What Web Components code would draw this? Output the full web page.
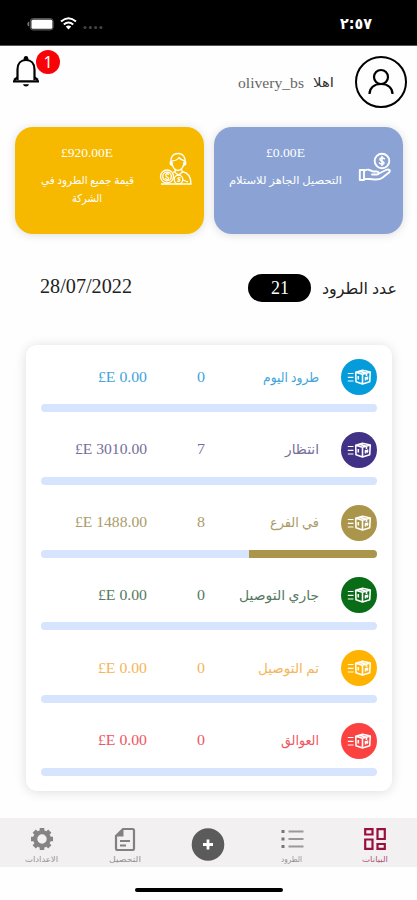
<!DOCTYPE html>
<html lang="ar">
<head>
<meta charset="utf-8">
<title>Olivery</title>
<style>
body{margin:0;background:#fff;font-family:"Liberation Serif","DejaVu Sans",serif;color:#222}
</style>
</head>
<body>
<app-screen></app-screen>
<script>
const define = (name, html, init) => customElements.define(name, class extends HTMLElement {
  connectedCallback() {
    if (this.shadowRoot) return;
    const root = this.attachShadow({mode: 'open'});
    root.innerHTML = typeof html === 'function' ? html(this) : html;
    if (init) init(this, root);
  }
});

/* A single line of text, condensed or widened to the width given by "w". */
define('fit-text', el => `<style>
  :host{display:block;width:${el.getAttribute('w')}px;white-space:nowrap;direction:ltr;text-align:left;flex:none}
  span{display:inline-block;transform-origin:0 50%;direction:${/[\u0600-\u06ff]/.test(el.textContent) ? 'rtl' : 'ltr'}}
</style><span><slot></slot></span>`, (el, root) => {
  const s = root.querySelector('span');
  const n = s.getBoundingClientRect().width;
  if (n) s.style.transform = `scaleX(${el.getAttribute('w') / n})`;
});

define('status-bar', `<style>
  :host{display:flex;box-sizing:border-box;height:46px;background:#000;border-bottom:1px solid #555;color:#fff;padding:2px 45px 0 27px;align-items:center;justify-content:space-between}
  div{display:flex;align-items:center;gap:6px}
  fit-text{font:bold 16px/20px "DejaVu Sans",sans-serif}
</style>
<div>
 <svg width="27" height="14" viewBox="0 0 27 14"><path d="M2 4.5Q.3 5 .3 7T2 9.500Z" fill="#777"/><rect x="3.200" y="1.500" width="23" height="11.500" rx="3" fill="#333" stroke="#555"/><rect x="4.500" y="2.700" width="20.800" height="9" rx="1.500" fill="#fff"/></svg>
 <svg width="17" height="13" viewBox="0 0 17 13" fill="none" stroke="#fff" stroke-width="2"><path d="M1 4.500Q8.500-2 16 4.500M3.800 7.600Q8.500 3.500 13.200 7.600"/><path d="M5.800 9.600Q8.500 7.400 11.200 9.600L8.500 12.500Z" fill="#fff" stroke="none"/></svg>
 <svg width="20" height="13" viewBox="0 0 20 13" fill="#444"><circle cx="2" cy="10.500" r="1.500"/><circle cx="7.300" cy="10.500" r="1.500"/><circle cx="12.600" cy="10.500" r="1.500"/><circle cx="17.900" cy="10.500" r="1.500"/></svg>
</div>
<fit-text w="32">٢:٥٧</fit-text>`);

define('user-header', `<style>
  :host{display:flex;box-sizing:border-box;height:81px;padding:10px 10px 0 13px;justify-content:space-between;align-items:flex-start}
  .bell{position:relative;width:26px;height:31px}
  .bell svg{display:block}
  .badge{position:absolute;left:23px;top:-6px;width:24px;height:24px;border-radius:50%;background:#f80308;color:#fff;font:16px/24px "Noto Sans",sans-serif;text-align:center}
  .user{display:flex;align-items:center}
  .n{font-size:15px;color:#666;margin-right:9px;padding-top:2px}
  .h{font-size:12.5px;color:#333;margin-right:21px;padding-top:2px}
</style>
<div class="bell"><svg width="26" height="31" viewBox="0 0 26 31"><g fill="none" stroke="#000" stroke-width="2.200"><path d="M4.500 24V13.500C4.500 7.500 8 4 13 4s8.500 3.500 8.500 9.500V24"/><path d="M1 23.800L4.500 21.500M25 23.800L21.500 21.500M0 25.300H26"/></g><path d="M10.500 4Q10.500 0 13 0T15.500 4ZM10 28.300H16Q15.500 30.500 13 30.500T10 28.300Z"/></svg><div class="badge">1</div></div>
<div class="user"><fit-text class="n" w="66">olivery_bs</fit-text><fit-text class="h" w="21">اهلا</fit-text>
<svg width="52" height="52" viewBox="0 0 52 52" fill="none" stroke="#000"><circle cx="26" cy="26" r="25" stroke-width="2"/><circle cx="26" cy="21" r="7" stroke-width="2.200"/><path d="M14.500 38C14.500 32 19 28 26 28S37.500 32 37.500 38" stroke-width="2.200"/></svg></div>`);

define('summary-card', `<style>
  :host{display:flex;direction:rtl;box-sizing:border-box;width:189px;height:107px;border-radius:18px;padding-top:17px;box-shadow:0 1px 10px #0002;color:#fff}
  .ic{width:34px;height:36px;margin:8px 11px 0 0;flex:none}
  .t{display:flex;flex-direction:column;align-items:center;width:114px;margin-right:15px}
</style><div class="ic"><slot name="icon"></slot></div><div class="t"><slot></slot></div>`);

define('summary-cards', `<style>
  :host{display:flex;justify-content:space-between;padding:0 14.500px 0 15px}
  .o{background:#f7b900}.b{background:#8aa3d4}
  .v{font-size:13px;line-height:17px}
  .l{font-size:11px;line-height:18px}
  .f{margin-top:10px}
  svg{display:block;fill:none;stroke:#fff}
</style>
<summary-card class="o">
 <svg slot="icon" width="34" height="36" viewBox="0 0 34 36" stroke-width="1.300"><path d="M12 12C11 5 14 1.500 19 1.500S27 5 26 12M12.500 9C17 9 19 7 20 5.500C22 8 24 8 25.500 9M13 10C13 15 16 18.500 19 18.500S25 15 25 10M11.500 9.500Q10.500 13 13 13M26.500 9.500Q27.500 13 25 13M16 17.500V20.500L19.500 23L23 20.500V17.500M14 20.500L16 19.500M23 19.500C29 20.500 32 24 32 32H2"/><circle cx="8" cy="24.500" r="6.500"/><circle cx="8" cy="24.500" r="4.300"/><path d="M10 22.500C8 21 6 22 7 24S10 25 9.500 27S6.500 27 6 26"/><circle cx="19.500" cy="27.500" r="4.300"/><path d="M21.500 26C19 25 18 27 20 27.500S20 30 18 29M24 28L29 30"/></svg>
 <fit-text class="v" w="52">£920.00E</fit-text><fit-text class="l f" w="93">قيمة جميع الطرود في</fit-text><fit-text class="l" w="30">الشركة</fit-text>
</summary-card>
<summary-card class="b">
 <svg slot="icon" width="34" height="36" viewBox="0 0 34 36" stroke-width="1.900" stroke-linejoin="round" stroke-linecap="round"><circle cx="24" cy="9" r="7.300"/><path d="M26.300 6.700C24 5 21.700 6 22 7.700S26.300 9 26 11S23 12.500 21.500 11M24 4.500V13.500" stroke-width="1.600"/><path d="M1.800 18H6V28H1.800ZM6 19C10 16.500 12 18 15 19.500H19C21.500 20 21 22.500 19 22.500H14M21 21.500L28 18C31 16.500 33 18.500 31 20.500L24 26C20 29 15 27 11 27H6"/></svg>
 <fit-text class="v" w="39">£0.00E</fit-text><fit-text class="l f" w="113">التحصيل الجاهز للاستلام</fit-text>
</summary-card>`);

define('count-row', `<style>
  :host{display:flex;direction:rtl;align-items:center;height:28px;margin-top:40px;padding:0 20px 0 40px}
  .p{display:flex;box-sizing:border-box;width:63px;height:28px;margin-right:11px;background:#000;color:#fff;border-radius:14px;align-items:center;justify-content:center;font-size:19px}
  .l{font-size:16px}
  .d{font-size:20px;margin-right:auto;padding-bottom:4px}
</style><fit-text class="l" w="75">عدد الطرود</fit-text><div class="p"><fit-text w="18">21</fit-text></div><fit-text class="d" w="92">28/07/2022</fit-text>`);

define('status-row', el => {
  const a = n => el.getAttribute(n);
  return `<style>
  :host{display:block;height:72.8px}
  .r{display:flex;direction:rtl;align-items:center;height:36px}
  .i{width:36px;height:36px;border-radius:50%;background:${a('color')};flex:none}
  .n{margin-right:22px;font-size:13.5px;color:${a('ink')}}
  .s{flex:1}
  .c{width:8px;margin-left:50px;font-size:15px;color:${a('ink')}}
  .m{display:flex;width:106px;font-size:15px;color:${a('ink')}}
  .b{height:8px;border-radius:4px;margin-top:9px;overflow:hidden;background:#d7e4fd;direction:rtl}
  .b div{height:8px;width:${a('fill') || 0}%;background:${a('color')}}
</style><div class="r"><svg class="i" viewBox="0 0 36 36" fill="none" stroke="#fff" stroke-width="1.600" stroke-linejoin="round"><path d="M6.800 14.500H12.500M6.800 18.300H12.500M6.800 22H12.500" stroke-width="1.200"/><path d="M14.700 13.200L21.500 11.200L29.300 13L28.700 22.800L21.500 25L15 22.800ZM14.700 13.200L21.500 15.300L29.300 13M21.500 15.500V25M18 12.200L25.500 14.200V17M17.300 17V20.500M24.500 21.500V18.500L26.500 20V17.500"/></svg>
<fit-text class="n" w="${a('w')}">${a('name')}</fit-text><span class="s"></span><fit-text class="c" w="8">${a('count')}</fit-text><div class="m"><fit-text w="${a('mw')}">${a('amount')}</fit-text></div></div><div class="b"><div></div></div>`;
});

define('status-list', `<style>
  :host{display:block;box-sizing:border-box;width:366px;height:446px;margin:43px 0 0 26px;padding:14px 15px 0;border-radius:11px;background:#fff;box-shadow:0 1px 12px #0002}
</style>
<status-row name="طرود اليوم" w="56" count="0" amount="£E 0.00" mw="49" color="#059cdc" ink="#41a5db"></status-row>
<status-row name="انتظار" w="34" count="7" amount="£E 3010.00" mw="72" color="#413285" ink="#766e9b"></status-row>
<status-row name="في الفرع" w="49" count="8" amount="£E 1488.00" mw="72" color="#ab954b" ink="#a99c68" fill="38"></status-row>
<status-row name="جاري التوصيل" w="80" count="0" amount="£E 0.00" mw="49" color="#096c17" ink="#55795f"></status-row>
<status-row name="تم التوصيل" w="61" count="0" amount="£E 0.00" mw="49" color="#ffb300" ink="#f4b65a"></status-row>
<status-row name="العوالق" w="38" count="0" amount="£E 0.00" mw="49" color="#fc4141" ink="#ee5662"></status-row>`);

define('nav-item', `<style>
  :host{display:flex;flex:1;flex-direction:column;align-items:center;color:#929092;font-size:8px;line-height:11px}
  ::slotted(svg){display:block;margin:9px 0 3px}
</style><slot></slot>`);

define('bottom-nav', `<style>
  :host{display:flex;direction:rtl;height:49px;margin-top:27px;background:#f2f0f1}
  .on{color:#b0577a}
</style>
<nav-item class="on"><svg width="24" height="24" viewBox="0 0 24 24" fill="none" stroke="#99103f" stroke-width="2.200"><path d="M2.200 2.200H9.500V7.500H2.200ZM14.500 2.200H21.800V12H14.500ZM2.200 12.500H9.500V21.800H2.200ZM14.500 17H21.800V21.800H14.500Z"/></svg><fit-text w="26">البيانات</fit-text></nav-item>
<nav-item><svg width="24" height="24" viewBox="0 0 24 24" stroke="#999" stroke-width="2"><path d="M8.500 4.500H23.500M8.500 12H23.500M8.500 19.500H23.500"/><path d="M1.500 4.500H4.500M1.500 12H4.500M1.500 19.500H4.500" stroke="#777" stroke-width="3"/></svg><fit-text w="21">الطرود</fit-text></nav-item>
<nav-item><svg width="34" height="34" viewBox="0 0 34 34"><circle cx="17" cy="17.500" r="16.300" fill="#5c5b5c"/><path d="M17 12.500V22.500M12 17.500H22" stroke="#fff" stroke-width="2.800"/></svg></nav-item>
<nav-item><svg width="24" height="24" viewBox="0 0 24 24"><path d="M10 2H19.500Q21 2 21 3.500V21.500Q21 23 19.500 23H4.500Q3 23 3 21.500V9Z" fill="none" stroke="#828182" stroke-width="2.200"/><path d="M10.500 1V9.500H2.200Z" fill="#828182"/><path d="M7 14H17M7 18.500H13" stroke="#828182" stroke-width="2"/></svg><fit-text w="32">التحصيل</fit-text></nav-item>
<nav-item><svg width="24" height="24" viewBox="0 0 24 24" fill="none" stroke="#858485"><circle cx="12" cy="12" r="6.800" stroke-width="4.200"/><path d="M12 1V4.500M12 19.500V23M1 12H4.500M19.500 12H23M4.200 4.200L6.700 6.700M17.300 17.300L19.800 19.800M4.200 19.800L6.700 17.300M17.300 6.700L19.800 4.200" stroke-width="4.600"/></svg><fit-text w="33">الاعدادات</fit-text></nav-item>`);

define('app-screen', `<style>
  :host{display:block;width:417px;height:900px;overflow:hidden;background:#fefefe}
  .home{width:148px;height:4px;border-radius:2px;background:#000;margin:21px auto 0}
</style><status-bar></status-bar><user-header></user-header><summary-cards></summary-cards><count-row></count-row><status-list></status-list><bottom-nav></bottom-nav><div class="home"></div>`);
</script>
</body>
</html>
